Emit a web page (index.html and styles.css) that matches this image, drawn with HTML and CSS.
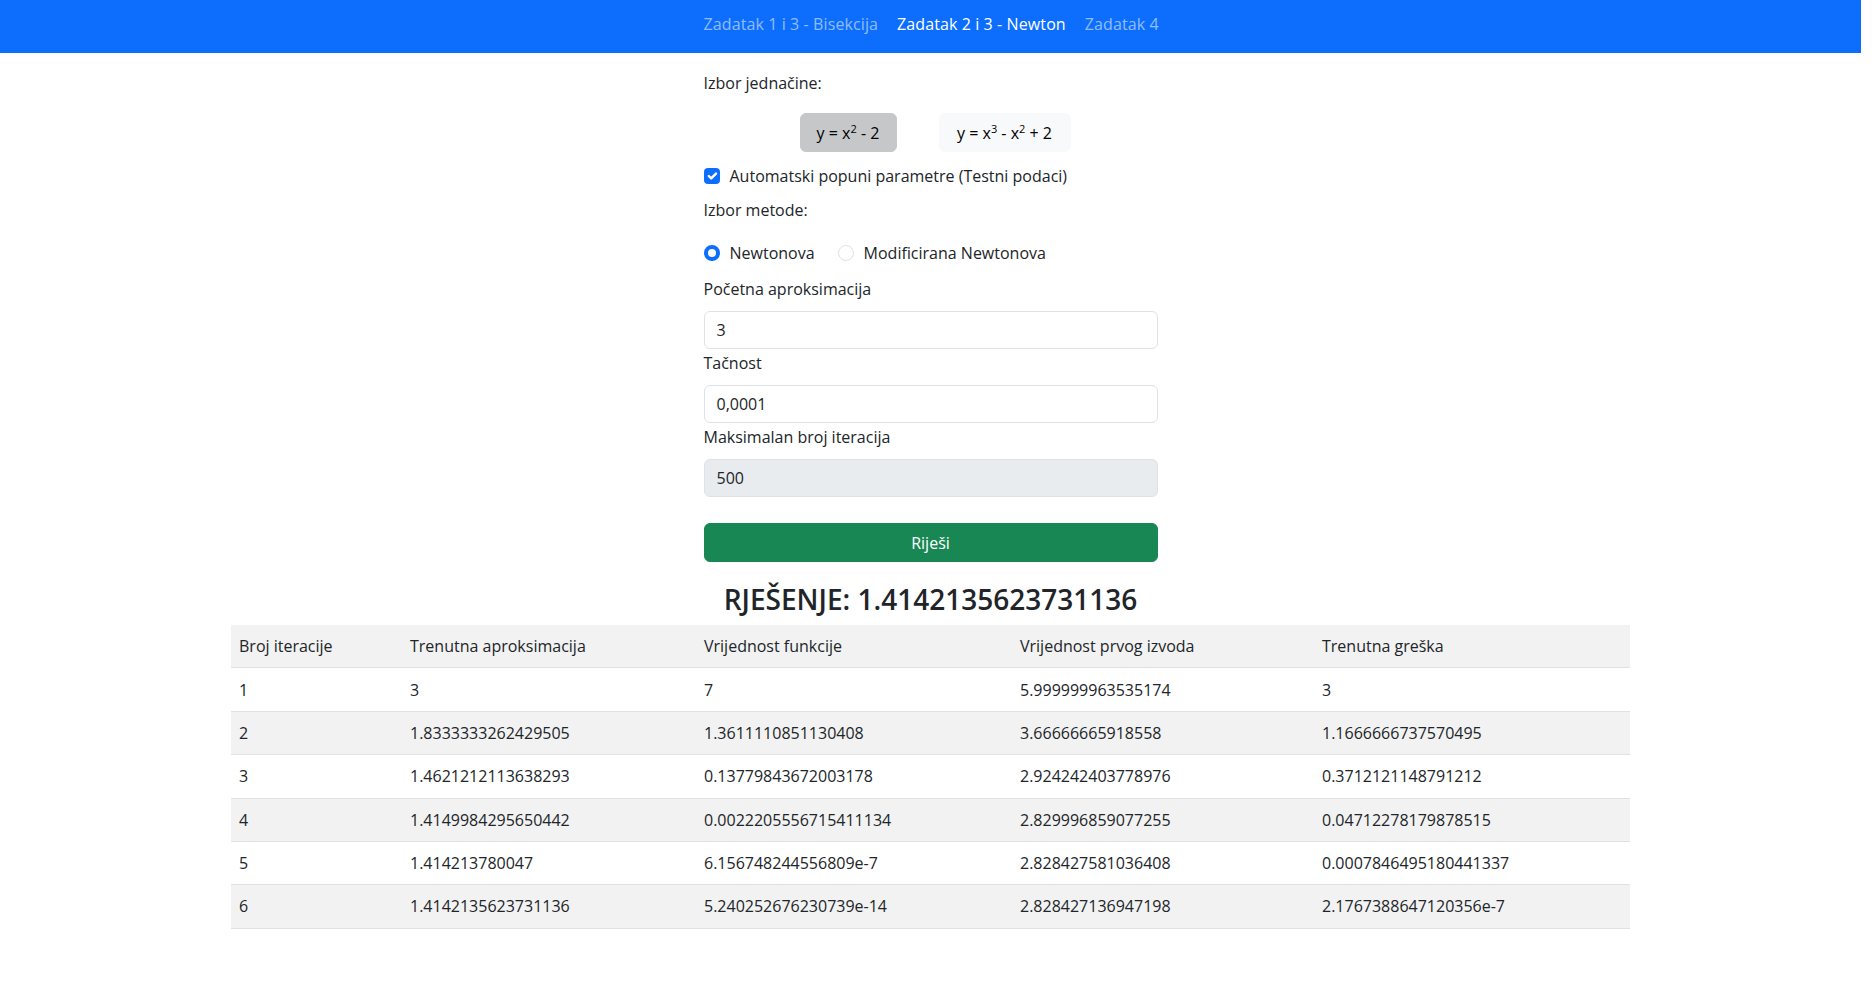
FILE: index.html
```html
<!DOCTYPE html>
<html lang="hr">
<head>
<meta charset="utf-8">
<title>Newton</title>
<link rel="stylesheet" href="styles.css">
</head>
<body>
<nav class="navbar">
  <div class="column nav-inner">
    <a class="nav-link">Zadatak 1 i 3 - Bisekcija</a>
    <a class="nav-link active">Zadatak 2 i 3 - Newton</a>
    <a class="nav-link">Zadatak 4</a>
  </div>
</nav>
<main class="shell">
  <div class="column form">
    <div class="label first">Izbor jednačine:</div>
    <div class="eq-row">
      <button class="eq-btn selected">y = x<sup>2</sup> - 2</button>
      <button class="eq-btn light">y = x<sup>3</sup> - x<sup>2</sup> + 2</button>
    </div>
    <div class="check-row">
      <span class="checkbox"><svg viewBox="0 0 20 20" width="16" height="16"><path d="m6 10 3 3 6-6" fill="none" stroke="#fff" stroke-width="3" stroke-linecap="round" stroke-linejoin="round"/></svg></span>
      <span>Automatski popuni parametre (Testni podaci)</span>
    </div>
    <div class="label method">Izbor metode:</div>
    <div class="radio-row">
      <span class="radio-item"><span class="radio on"></span>Newtonova</span>
      <span class="radio-item"><span class="radio"></span>Modificirana Newtonova</span>
    </div>
    <div class="label field-label first-field">Početna aproksimacija</div>
    <div class="input">3</div>
    <div class="label field-label">Tačnost</div>
    <div class="input">0,0001</div>
    <div class="label field-label">Maksimalan broj iteracija</div>
    <div class="input disabled">500</div>
    <button class="solve">Riješi</button>
    <h3 class="result">RJEŠENJE: 1.4142135623731136</h3>
  </div>
  <table class="results">
    <colgroup>
      <col class="c1"><col class="c2"><col class="c3"><col class="c4"><col class="c5">
    </colgroup>
    <thead>
      <tr><th>Broj iteracije</th><th>Trenutna aproksimacija</th><th>Vrijednost funkcije</th><th>Vrijednost prvog izvoda</th><th>Trenutna greška</th></tr>
    </thead>
    <tbody>
      <tr><td>1</td><td>3</td><td>7</td><td>5.999999963535174</td><td>3</td></tr>
      <tr class="alt"><td>2</td><td>1.8333333262429505</td><td>1.3611110851130408</td><td>3.66666665918558</td><td>1.1666666737570495</td></tr>
      <tr><td>3</td><td>1.4621212113638293</td><td>0.13779843672003178</td><td>2.924242403778976</td><td>0.3712121148791212</td></tr>
      <tr class="alt"><td>4</td><td>1.4149984295650442</td><td>0.0022205556715411134</td><td>2.829996859077255</td><td>0.04712278179878515</td></tr>
      <tr><td>5</td><td>1.414213780047</td><td>6.156748244556809e-7</td><td>2.828427581036408</td><td>0.0007846495180441337</td></tr>
      <tr class="alt"><td>6</td><td>1.4142135623731136</td><td>5.240252676230739e-14</td><td>2.828427136947198</td><td>2.1767388647120356e-7</td></tr>
    </tbody>
  </table>
</main>
</body>
</html>
```

FILE: styles.css
```css
* { box-sizing: border-box; }
html, body { margin: 0; padding: 0; }
body {
  font-family: "Open Sans", "Noto Sans", sans-serif;
  font-size: 16px;
  line-height: 24px;
  color: #212529;
  background: #fff;
}
.navbar {
  background: #0d6efd;
  height: 53px;
  width: 1861px;
}
.column {
  width: 454px;
  margin: 0 auto;
}
.nav-inner {
  display: flex;
  padding-top: 12px;
}
.nav-link {
  color: rgba(255, 255, 255, 0.55);
  margin-right: 19px;
  white-space: nowrap;
  letter-spacing: 0.1px;
}
.nav-link.active { color: #fff; }
.shell { width: 1861px; }
.form { display: flex; flex-direction: column; }
.label { height: 24px; }
.label.first { margin-top: 18px; }
.eq-row {
  display: flex;
  gap: 42px;
  margin-top: 18px;
  padding-left: 96px;
}
.eq-btn {
  font-family: inherit;
  font-size: 16px;
  line-height: 24px;
  height: 39px;
  border-radius: 6px;
  color: #000;
  padding: 0;
  text-align: center;
}
.eq-btn sup { font-size: 11px; line-height: 0; vertical-align: 6px; }
.eq-btn.selected { width: 97px; background: #c6c7c8; border: 1px solid #c6c7c8; }
.eq-btn.light { width: 132px; background: #f8f9fa; border: 1px solid #f8f9fa; }
.check-row {
  display: flex;
  align-items: center;
  margin-top: 12px;
  height: 24px;
  white-space: nowrap;
}
.checkbox {
  width: 16px;
  height: 16px;
  border-radius: 4px;
  background: #0d6efd;
  margin-right: 10px;
  display: flex;
}
.label.method { margin-top: 10px; }
.radio-row {
  display: flex;
  margin-top: 19px;
  height: 24px;
}
.radio-item {
  display: flex;
  align-items: center;
  margin-right: 23px;
  white-space: nowrap;
}
.radio {
  width: 16px;
  height: 16px;
  border-radius: 50%;
  border: 1px solid #dee2e6;
  background: #fff;
  margin-right: 10px;
}
.radio.on {
  border: 4px solid #0d6efd;
  background: #fff;
}
.field-label { margin-top: 2px; margin-bottom: 10px; }
.field-label.first-field { margin-top: 12px; }
.input {
  height: 38px;
  border: 1px solid #dee2e6;
  border-radius: 6px;
  padding: 6px 12px;
  background: #fff;
}
.input.disabled { background: #e9ecef; }
.solve {
  margin-top: 26px;
  height: 39px;
  background: #198754;
  border: 1px solid #198754;
  border-radius: 6px;
  color: #fff;
  font-family: inherit;
  font-size: 16px;
  line-height: 24px;
}
.result {
  margin: 18px 0 0;
  font-size: 28px;
  line-height: 38px;
  font-weight: 600;
  text-align: center;
  white-space: nowrap;
}
.results {
  width: 1399px;
  margin: 7px auto 0;
  border-collapse: collapse;
  table-layout: fixed;
}
.c1 { width: 171px; }
.c2 { width: 294px; }
.c3 { width: 316px; }
.c4 { width: 302px; }
.c5 { width: 316px; }
.results th, .results td {
  text-align: left;
  font-weight: 400;
  padding: 9.2px 8px;
  border-bottom: 1px solid #dee2e6;
  white-space: nowrap;
}
.results thead tr, .results tr.alt { background: #f2f2f2; }
```
